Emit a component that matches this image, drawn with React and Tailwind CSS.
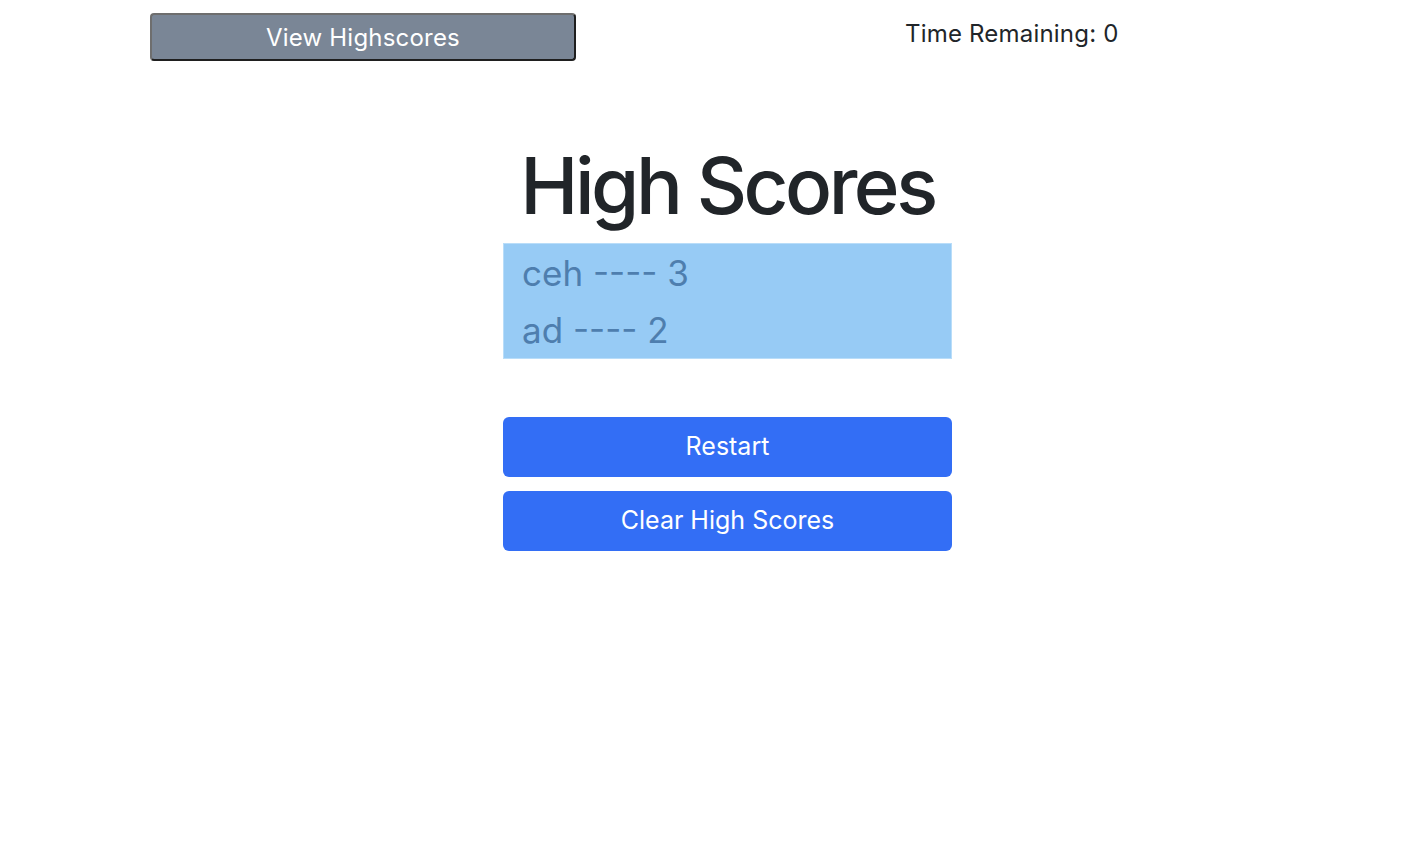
export default function App() {
  const scores = [
    { name: "ceh", score: 3 },
    { name: "ad", score: 2 },
  ];

  return (
    <div className="min-h-[856px] bg-white font-['Inter',sans-serif] text-[#212529]">
      <div className="w-[1140px] mx-auto px-3">
        {/* Top bar */}
        <div className="flex items-start pt-[13px]">
          <button className="w-[426px] h-[48px] bg-[#7a8696] text-white text-[24px] tracking-[0.2px] rounded-[4px] border-2 border-t-[#6e6e6e] border-l-[#6e6e6e] border-r-[#1f1f1f] border-b-[#1f1f1f] pt-[1px]">
            View Highscores
          </button>
          <span className="ml-[329px] mt-[4px] text-[24px] leading-[34px] tracking-[0.2px]">Time Remaining: 0</span>
        </div>

        {/* High scores */}
        <div className="ml-[353px] w-[449px] mt-[77px]">
          <h1 className="text-center whitespace-nowrap text-[78px] leading-[96px] font-medium tracking-[-3.5px] mb-[9px]">
            High Scores
          </h1>
          <ul className="bg-[#97cbf5] border border-[#b9ddf9] text-[#4e7eae] text-[35px]">
            {scores.map((s) => (
              <li key={s.name} className="h-[57px] flex items-center pl-[18px] pt-[1px]">
                {s.name} ---- {s.score}
              </li>
            ))}
          </ul>
          <div className="mt-[58px] flex flex-col gap-[14px]">
            <button className="h-[60px] rounded-[6px] bg-[#336ef5] text-white text-[25px]">Restart</button>
            <button className="h-[60px] rounded-[6px] bg-[#336ef5] text-white text-[25px]">Clear High Scores</button>
          </div>
        </div>
      </div>
    </div>
  );
}
